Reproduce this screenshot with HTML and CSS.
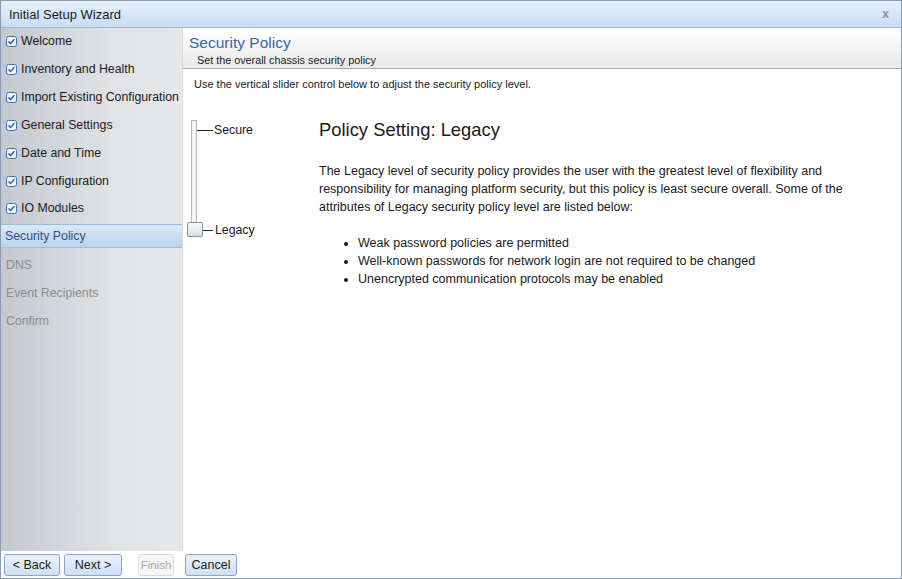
FILE: index.html
```html
<!DOCTYPE html>
<html>
<head>
<meta charset="utf-8">
<link rel="stylesheet" href="styles.css">
</head>
<body>
<div class="window">
  <div class="titlebar">
    <span class="title">Initial Setup Wizard</span>
    <span class="close">x</span>
  </div>
  <div class="body">
    <div class="sidebar">
      <div class="step done first"><span class="cb"><svg width="11" height="11" viewBox="0 0 11 11"><rect x="0.5" y="0.5" width="10" height="10" rx="2" fill="#eef5fc" stroke="#3d72b4"/><path d="M2.5 5.5 L4.5 7.5 L8.5 3.2" fill="none" stroke="#2a5da0" stroke-width="1.4"/></svg></span>Welcome</div>
      <div class="step done"><span class="cb"><svg width="11" height="11" viewBox="0 0 11 11"><rect x="0.5" y="0.5" width="10" height="10" rx="2" fill="#eef5fc" stroke="#3d72b4"/><path d="M2.5 5.5 L4.5 7.5 L8.5 3.2" fill="none" stroke="#2a5da0" stroke-width="1.4"/></svg></span>Inventory and Health</div>
      <div class="step done"><span class="cb"><svg width="11" height="11" viewBox="0 0 11 11"><rect x="0.5" y="0.5" width="10" height="10" rx="2" fill="#eef5fc" stroke="#3d72b4"/><path d="M2.5 5.5 L4.5 7.5 L8.5 3.2" fill="none" stroke="#2a5da0" stroke-width="1.4"/></svg></span>Import Existing Configuration</div>
      <div class="step done"><span class="cb"><svg width="11" height="11" viewBox="0 0 11 11"><rect x="0.5" y="0.5" width="10" height="10" rx="2" fill="#eef5fc" stroke="#3d72b4"/><path d="M2.5 5.5 L4.5 7.5 L8.5 3.2" fill="none" stroke="#2a5da0" stroke-width="1.4"/></svg></span>General Settings</div>
      <div class="step done"><span class="cb"><svg width="11" height="11" viewBox="0 0 11 11"><rect x="0.5" y="0.5" width="10" height="10" rx="2" fill="#eef5fc" stroke="#3d72b4"/><path d="M2.5 5.5 L4.5 7.5 L8.5 3.2" fill="none" stroke="#2a5da0" stroke-width="1.4"/></svg></span>Date and Time</div>
      <div class="step done"><span class="cb"><svg width="11" height="11" viewBox="0 0 11 11"><rect x="0.5" y="0.5" width="10" height="10" rx="2" fill="#eef5fc" stroke="#3d72b4"/><path d="M2.5 5.5 L4.5 7.5 L8.5 3.2" fill="none" stroke="#2a5da0" stroke-width="1.4"/></svg></span>IP Configuration</div>
      <div class="step done short"><span class="cb"><svg width="11" height="11" viewBox="0 0 11 11"><rect x="0.5" y="0.5" width="10" height="10" rx="2" fill="#eef5fc" stroke="#3d72b4"/><path d="M2.5 5.5 L4.5 7.5 L8.5 3.2" fill="none" stroke="#2a5da0" stroke-width="1.4"/></svg></span>IO Modules</div>
      <div class="step current">Security Policy</div>
      <div class="step todo">DNS</div>
      <div class="step todo">Event Recipients</div>
      <div class="step todo">Confirm</div>
    </div>
    <div class="main">
      <div class="header">
        <div class="h-title">Security Policy</div>
        <div class="h-sub">Set the overall chassis security policy</div>
      </div>
      <div class="content">
        <p class="intro">Use the vertical slider control below to adjust the security policy level.</p>
        <div class="policy">
          <div class="slider">
            <div class="track"></div>
            <div class="tick tick-top"><span class="line"></span>Secure</div>
            <div class="tick tick-bottom"><span class="line"></span>Legacy</div>
            <div class="thumb"></div>
          </div>
          <div class="desc">
            <h2>Policy Setting: Legacy</h2>
            <p>The Legacy level of security policy provides the user with the greatest level of flexibility and responsibility for managing platform security, but this policy is least secure overall. Some of the attributes of Legacy security policy level are listed below:</p>
            <ul>
              <li>Weak password policies are permitted</li>
              <li>Well-known passwords for network login are not required to be changed</li>
              <li>Unencrypted communication protocols may be enabled</li>
            </ul>
          </div>
        </div>
      </div>
    </div>
  </div>
  <div class="footer">
    <button class="btn b-back">&lt; Back</button>
    <button class="btn b-next">Next &gt;</button>
    <button class="btn b-finish disabled">Finish</button>
    <button class="btn b-cancel">Cancel</button>
  </div>
</div>
</body>
</html>
```
FILE: styles.css
```css
* { box-sizing: border-box; }
html, body { margin: 0; padding: 0; }
body {
  width: 902px;
  height: 579px;
  font-family: "Liberation Sans", Arial, sans-serif;
  color: #1a1a1a;
  background: #fff;
}
.window {
  width: 902px;
  height: 579px;
  border: 1px solid #8c9db3;
  display: flex;
  flex-direction: column;
}
.titlebar {
  height: 27px;
  flex: none;
  background: linear-gradient(#e6f0fc, #c9ddf4);
  border-bottom: 1px solid #9fb7d4;
  display: flex;
  align-items: center;
  justify-content: space-between;
  padding: 0 12px 0 8px;
}
.title { font-size: 13px; color: #1b1b1b; }
.close { font-size: 12px; font-weight: bold; color: #8a8f96; }
.body {
  flex: 1;
  display: flex;
  min-height: 0;
}
.sidebar {
  width: 182px;
  flex: none;
  background: linear-gradient(to right, #c4c9d0, #e0e2e5 60%, #e7e8ea);
  border-right: 1px solid #d9dbde;
}
.step {
  height: 28px;
  display: flex;
  align-items: center;
  font-size: 12.3px;
  padding-left: 5px;
  color: #1b1b1b;
  white-space: nowrap;
}
.step.first { margin-top: -1px; }
.step.short { height: 26px; }
.cb { display: inline-flex; margin-right: 4px; }
.step.current {
  height: 24px;
  margin-top: 3px;
  margin-bottom: 3px;
  background: linear-gradient(#dce8f6, #bcd3ee);
  border-top: 1px solid #9bbde0;
  border-bottom: 1px solid #9bbde0;
  color: #2d4f86;
  padding-left: 4px;
}
.step.todo { color: #8c8c8c; }
.main {
  flex: 1;
  display: flex;
  flex-direction: column;
  background: #fff;
}
.header {
  height: 41px;
  flex: none;
  background: linear-gradient(#ffffff, #e9e9e9);
  border-bottom: 1px solid #a9a9a9;
  padding: 5px 0 0 6px;
}
.h-title { font-size: 15.5px; color: #3a67a5; line-height: 20px; }
.h-sub { font-size: 10.8px; color: #1b1b1b; padding-left: 8px; line-height: 15px; }
.content { padding: 8px 0 0 11px; }
.intro { margin: 0; font-size: 11px; line-height: 14px; }
.policy { display: flex; margin-top: 29px; margin-left: -7px; }
.slider {
  position: relative;
  width: 132px;
  height: 130px;
  flex: none;
}
.track {
  position: absolute;
  left: 4px;
  top: 0;
  width: 6px;
  height: 112px;
  border: 1px solid #b9b9b9;
  background: #f4f4f4;
}
.tick {
  position: absolute;
  display: flex;
  align-items: center;
  font-size: 12.3px;
  line-height: 14px;
}
.tick .line { height: 1px; background: #222; }
.tick-top { top: 3px; left: 10px; }
.tick-top .line { width: 16px; margin-right: 1px; }
.tick-bottom { top: 103px; left: 16px; }
.tick-bottom .line { width: 10px; margin-right: 2px; }
.thumb {
  position: absolute;
  left: 0;
  top: 102px;
  width: 16px;
  height: 15px;
  border: 1px solid #8c96a2;
  border-radius: 2px;
  background: linear-gradient(#fafbfc, #d8dde4);
}
.desc h2 {
  margin: -1px 0 0 0;
  font-weight: normal;
  font-size: 18.4px;
  line-height: 22px;
  color: #1b1b1b;
}
.desc p {
  margin: 21px 0 0 0;
  font-size: 12.5px;
  line-height: 18px;
  width: 525px;
}
.desc ul {
  margin: 18px 0 0 0;
  padding-left: 39px;
  font-size: 12.5px;
  line-height: 18px;
}
.footer {
  height: 27px;
  flex: none;
  background: #fff;
  display: flex;
  align-items: center;
  padding-left: 3px;
}
.btn {
  height: 22px;
  font-family: inherit;
  font-size: 12.5px;
  color: #1b1b1b;
  padding: 0;
  border: 1px solid #86a6cf;
  border-radius: 3px;
  background: linear-gradient(#eaf2fb, #cfe0f3);
}
.b-back { width: 56px; }
.b-next { width: 58px; margin-left: 4px; }
.b-finish { width: 36px; margin-left: 16px; font-size: 11.5px; }
.b-cancel { width: 52px; margin-left: 11px; }
.btn.disabled {
  color: #a6a6a6;
  border-color: #dadada;
  background: #f6f6f6;
}
```
